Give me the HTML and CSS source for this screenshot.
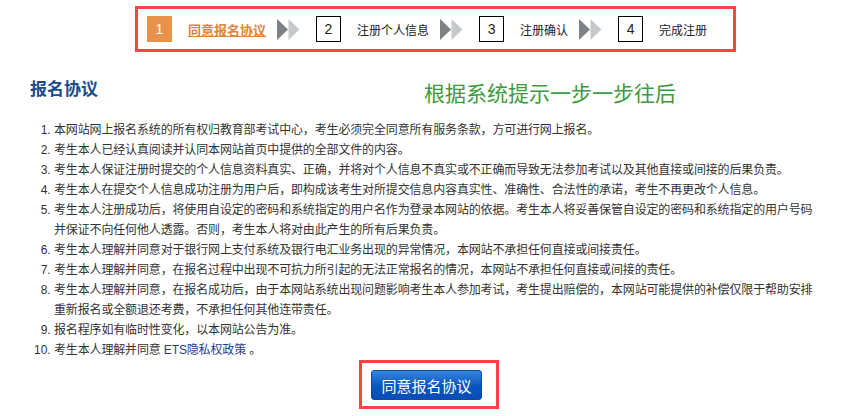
FILE: index.html
```html
<!DOCTYPE html>
<html lang="zh-CN">
<head>
<meta charset="utf-8">
<title>报名协议</title>
<link rel="stylesheet" href="styles.css">
</head>
<body>
<div class="steps">
  <span class="num num-active">1</span>
  <a class="label label-active" href="#">同意报名协议</a>
  <svg class="arrow" width="23" height="21" viewBox="0 0 23 21"><polygon points="0,0 11,10.5 0,21" fill="#7c8186"/><polygon points="11.5,0 22.5,10.5 11.5,21" fill="#c5c9cb"/></svg>
  <span class="num">2</span>
  <span class="label">注册个人信息</span>
  <svg class="arrow" width="23" height="21" viewBox="0 0 23 21"><polygon points="0,0 11,10.5 0,21" fill="#7c8186"/><polygon points="11.5,0 22.5,10.5 11.5,21" fill="#c5c9cb"/></svg>
  <span class="num">3</span>
  <span class="label">注册确认</span>
  <svg class="arrow" width="23" height="21" viewBox="0 0 23 21"><polygon points="0,0 11,10.5 0,21" fill="#7c8186"/><polygon points="11.5,0 22.5,10.5 11.5,21" fill="#c5c9cb"/></svg>
  <span class="num">4</span>
  <span class="label">完成注册</span>
</div>

<div class="head">
  <h2 class="title">报名协议</h2>
  <p class="hint">根据系统提示一步一步往后</p>
</div>

<ol class="terms">
  <li>本网站网上报名系统的所有权归教育部考试中心，考生必须完全同意所有服务条款，方可进行网上报名。</li>
  <li>考生本人已经认真阅读并认同本网站首页中提供的全部文件的内容。</li>
  <li>考生本人保证注册时提交的个人信息资料真实、正确，并将对个人信息不真实或不正确而导致无法参加考试以及其他直接或间接的后果负责。</li>
  <li>考生本人在提交个人信息成功注册为用户后，即构成该考生对所提交信息内容真实性、准确性、合法性的承诺，考生不再更改个人信息。</li>
  <li>考生本人注册成功后，将使用自设定的密码和系统指定的用户名作为登录本网站的依据。考生本人将妥善保管自设定的密码和系统指定的用户号码并保证不向任何他人透露。否则，考生本人将对由此产生的所有后果负责。</li>
  <li>考生本人理解并同意对于银行网上支付系统及银行电汇业务出现的异常情况，本网站不承担任何直接或间接责任。</li>
  <li>考生本人理解并同意，在报名过程中出现不可抗力所引起的无法正常报名的情况，本网站不承担任何直接或间接的责任。</li>
  <li>考生本人理解并同意，在报名成功后，由于本网站系统出现问题影响考生本人参加考试，考生提出赔偿的，本网站可能提供的补偿仅限于帮助安排重新报名或全额退还考费，不承担任何其他连带责任。</li>
  <li>报名程序如有临时性变化，以本网站公告为准。</li>
  <li>考生本人理解并同意 <a class="link" href="#">ETS隐私权政策</a> 。</li>
</ol>

<div class="actions">
  <div class="highlight">
    <button class="agree" type="button">同意报名协议</button>
  </div>
</div>
</body>
</html>
```

FILE: styles.css
```css
* { box-sizing: border-box; }
html, body { margin: 0; padding: 0; background: #fff; }
body {
  font-family: "Liberation Sans", Arial, "Noto Sans CJK SC", sans-serif;
  color: #333;
  font-size: 12px;
}

.steps {
  display: flex;
  align-items: center;
  margin: 6px 0 0 135px;
  width: 601px;
  height: 46px;
  border: 3px solid #ff4343;
  padding-left: 9px;
}
.num {
  width: 25px;
  height: 26px;
  border: 1px solid #000;
  display: flex;
  align-items: center;
  justify-content: center;
  font-size: 14px;
  color: #222;
  margin-right: 16px;
  flex: none;
}
.num-active {
  background: #e8914a;
  border-color: #e8914a;
  color: #fff;
}
.label {
  font-size: 12px;
  color: #222;
  margin-right: 11px;
  text-decoration: none;
  white-space: nowrap;
}
.label-active {
  color: #e0843a;
  font-weight: bold;
  font-size: 13px;
  text-decoration: underline;
}
.arrow { display: block; margin-right: 16px; flex: none; }

.head {
  display: flex;
  align-items: flex-start;
  margin-top: 26px;
  padding-left: 30px;
  height: 24px;
}
.title {
  margin: 0;
  width: 394px;
  font-size: 17px;
  line-height: 24px;
  font-weight: bold;
  color: #1a4c8c;
}
.hint {
  margin: 4px 0 0;
  font-size: 21px;
  line-height: 24px;
  color: #3d9a3d;
}

.terms {
  margin: 18px 0 0;
  padding-left: 54px;
  width: 818px;
  line-height: 20px;
  font-size: 12px;
  letter-spacing: -0.15px;
}
.terms li::marker { letter-spacing: 0; }
.link { color: #2e3a8c; text-decoration: none; }

.actions {
  display: flex;
  justify-content: center;
  padding-left: 1px;
}
.highlight {
  border: 3px solid #ff4343;
  padding: 7px 14px 6px 9px;
}
.agree {
  display: block;
  width: 111px;
  height: 30px;
  border: 1px solid #0b4aa8;
  border-radius: 3px;
  background: linear-gradient(#3386dc, #0a55c0 55%, #0a4db6);
  color: #fff;
  font-family: "Liberation Sans", "Noto Sans CJK SC", sans-serif;
  font-size: 15px;
  padding: 0;
}
```
